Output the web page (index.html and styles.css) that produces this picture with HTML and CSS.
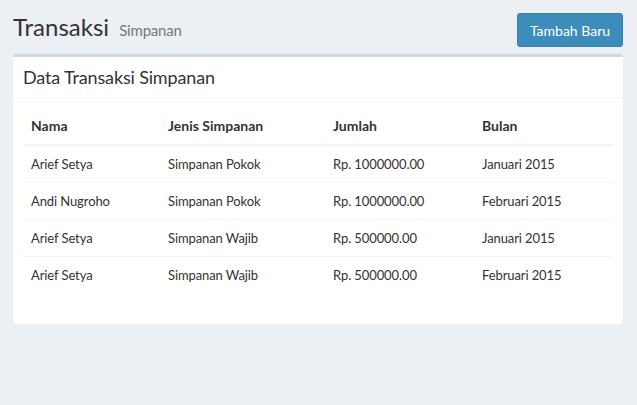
FILE: index.html
```html
<!DOCTYPE html>
<html>
<head>
<meta charset="utf-8">
<link rel="stylesheet" href="styles.css">
</head>
<body>
<div class="wrapper">
  <header class="content-header">
    <h1 class="title">Transaksi <small class="subtitle">Simpanan</small></h1>
    <button class="btn-primary">Tambah Baru</button>
  </header>
  <section class="box">
    <div class="box-header">
      <h3 class="box-title">Data Transaksi Simpanan</h3>
    </div>
    <div class="box-body">
      <table class="table">
        <thead>
          <tr><th class="c1">Nama</th><th class="c2">Jenis Simpanan</th><th class="c3">Jumlah</th><th class="c4">Bulan</th></tr>
        </thead>
        <tbody>
          <tr><td>Arief Setya</td><td>Simpanan Pokok</td><td>Rp. 1000000.00</td><td>Januari 2015</td></tr>
          <tr><td>Andi Nugroho</td><td>Simpanan Pokok</td><td>Rp. 1000000.00</td><td>Februari 2015</td></tr>
          <tr><td>Arief Setya</td><td>Simpanan Wajib</td><td>Rp. 500000.00</td><td>Januari 2015</td></tr>
          <tr><td>Arief Setya</td><td>Simpanan Wajib</td><td>Rp. 500000.00</td><td>Februari 2015</td></tr>
        </tbody>
      </table>
    </div>
  </section>
</div>
</body>
</html>
```
FILE: styles.css
```css
* { box-sizing: border-box; }
html, body { margin: 0; padding: 0; }
body {
  background: #ecf0f5;
  font-family: Lato, "Liberation Sans", sans-serif;
  color: #333;
  font-size: 14px;
}
.wrapper {
  padding: 13px 14px 0 13px;
}
.content-header {
  display: flex;
  justify-content: space-between;
  align-items: flex-start;
  height: 41px;
}
.title {
  margin: 0;
  font-size: 24px;
  font-weight: 400;
  line-height: 28px;
  color: #333;
}
.subtitle {
  font-size: 15px;
  color: #777;
  padding-left: 4px;
  letter-spacing: -0.2px;
}
.btn-primary {
  background: #3c8dbc;
  border: 1px solid #367fa9;
  border-radius: 3px;
  color: #fff;
  font-family: inherit;
  font-size: 14px;
  width: 106px;
  height: 34px;
  padding: 0;
}
.box {
  background: #fff;
  border-top: 3px solid #d2d6de;
  border-radius: 3px;
  box-shadow: 0 1px 1px rgba(0,0,0,0.1);
  height: 270px;
}
.box-header {
  padding: 0 10px;
  height: 41px;
  border-bottom: 1px solid #f4f4f4;
  display: flex;
  align-items: center;
}
.box-title {
  margin: 0;
  font-size: 18px;
  font-weight: 400;
  line-height: 1;
  letter-spacing: -0.15px;
}
.box-body {
  padding: 8px 10px 10px;
}
.table {
  width: 100%;
  border-collapse: collapse;
  border-spacing: 0;
}
.table th, .table td {
  padding: 8px;
  text-align: left;
  line-height: 20px;
  height: 37px;
}
.table th {
  font-weight: 700;
  border-bottom: 2px solid #f4f4f4;
  height: 38px;
  padding-top: 10px;
}
.table td {
  border-top: 1px solid #f4f4f4;
  font-size: 13px;
  letter-spacing: -0.1px;
}
.table tbody tr:first-child td { border-top: none; }
.c1 { width: 137px; }
.c2 { width: 165px; }
.c3 { width: 149px; }
```
